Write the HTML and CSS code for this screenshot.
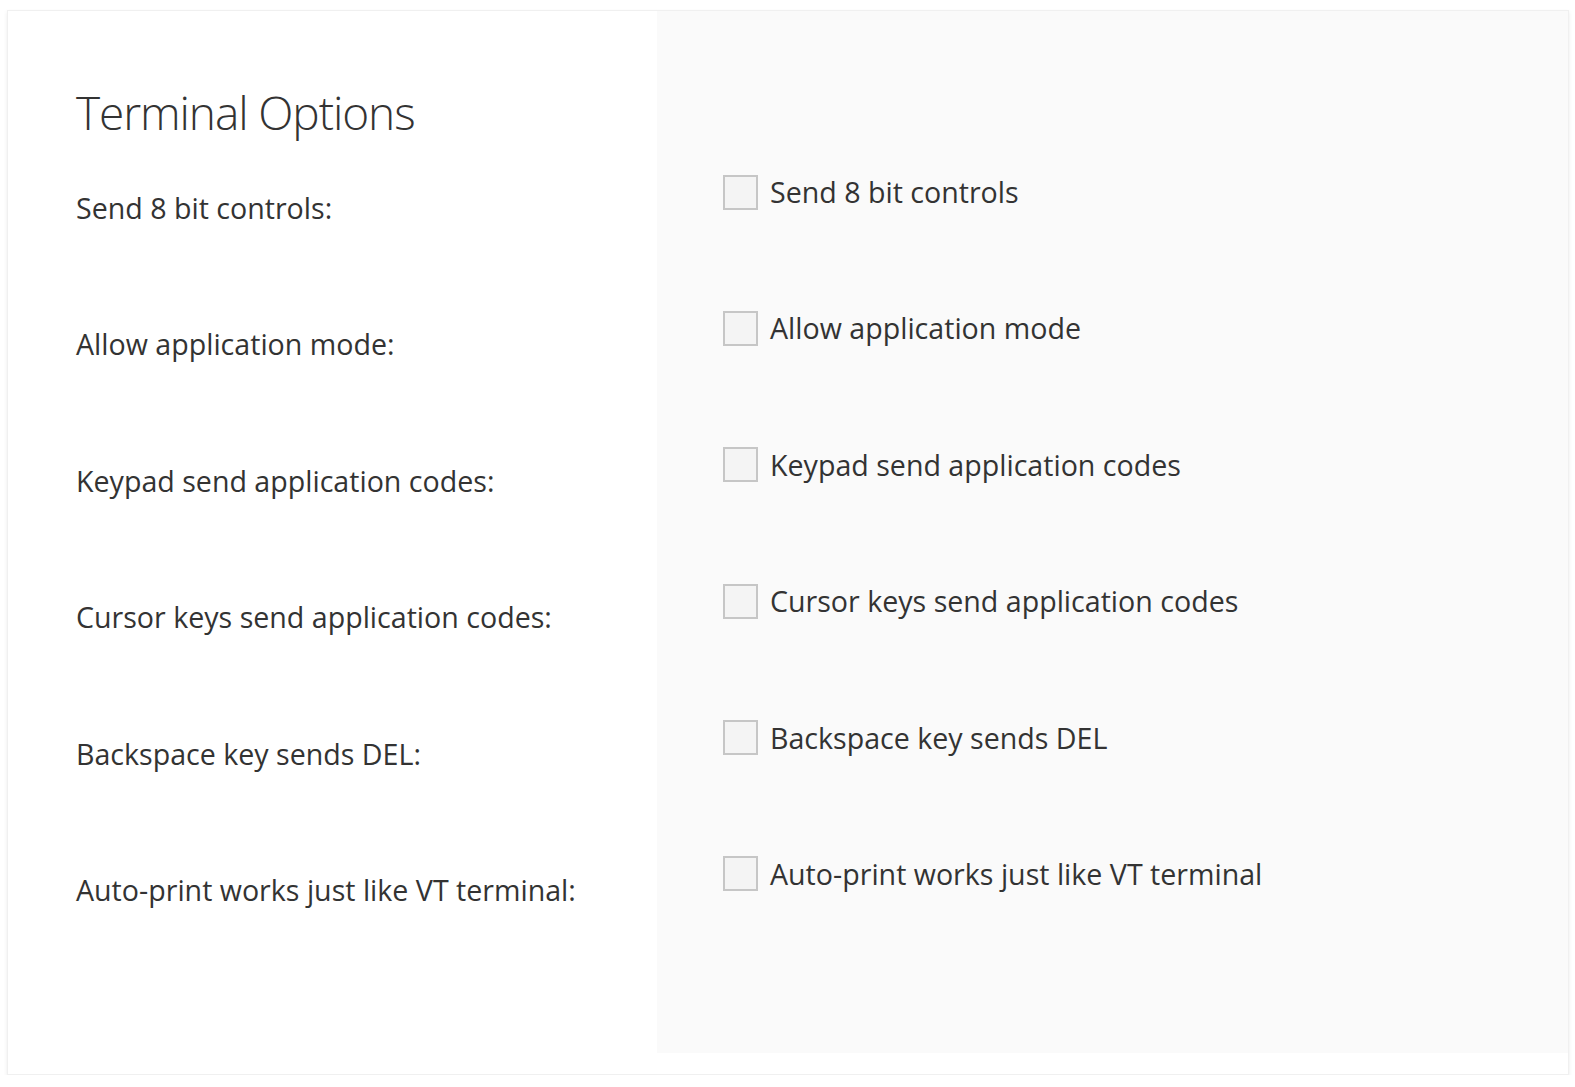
FILE: index.html
```html
<!DOCTYPE html>
<html>
<head>
<meta charset="utf-8">
<link rel="stylesheet" href="styles.css">
</head>
<body>
<div class="card">
  <div class="labels">
    <h1 class="title">Terminal Options</h1>
    <div class="row"><span class="label">Send 8 bit controls:</span></div>
    <div class="row"><span class="label">Allow application mode:</span></div>
    <div class="row"><span class="label">Keypad send application codes:</span></div>
    <div class="row"><span class="label">Cursor keys send application codes:</span></div>
    <div class="row"><span class="label">Backspace key sends DEL:</span></div>
    <div class="row"><span class="label">Auto-print works just like VT terminal:</span></div>
  </div>
  <div class="options">
    <div class="row"><label class="check"><span class="box"></span><span>Send 8 bit controls</span></label></div>
    <div class="row"><label class="check"><span class="box"></span><span>Allow application mode</span></label></div>
    <div class="row"><label class="check"><span class="box"></span><span>Keypad send application codes</span></label></div>
    <div class="row"><label class="check"><span class="box"></span><span>Cursor keys send application codes</span></label></div>
    <div class="row"><label class="check"><span class="box"></span><span>Backspace key sends DEL</span></label></div>
    <div class="row"><label class="check"><span class="box"></span><span>Auto-print works just like VT terminal</span></label></div>
  </div>
</div>
</body>
</html>
```

FILE: styles.css
```css
* { box-sizing: border-box; }
html, body { margin: 0; padding: 0; background: #ffffff; }
body {
  font-family: "Open Sans", "Noto Sans", sans-serif;
  color: #333333;
  padding: 10px 6px 0 7px;
}
.card {
  display: flex;
  height: 1065px;
  background: #ffffff;
  border: 1px solid #f0f0f0;
  box-shadow: 0 2px 4px rgba(0, 0, 0, 0.08);
}
.labels {
  width: 649px;
  padding-left: 68px;
}
.title {
  margin: 0;
  padding-top: 70px;
  height: 177px;
  font-weight: 300;
  font-size: 46px;
  line-height: 62px;
  letter-spacing: -1.1px;
  color: #333;
}
.row {
  height: 136.4px;
  display: flex;
  align-items: flex-start;
}
.label {
  font-size: 28.6px;
  line-height: 40px;
}
.options {
  flex: 1;
  background: #fafafa;
  margin-bottom: 21px;
  padding-top: 161px;
  padding-left: 66px;
}
.check {
  display: flex;
  align-items: center;
  gap: 12px;
  font-size: 28.6px;
  line-height: 40px;
}
.box {
  width: 35px;
  height: 35px;
  border: 2px solid #c6c6c6;
  background: #f4f4f4;
  flex: none;
}
```
